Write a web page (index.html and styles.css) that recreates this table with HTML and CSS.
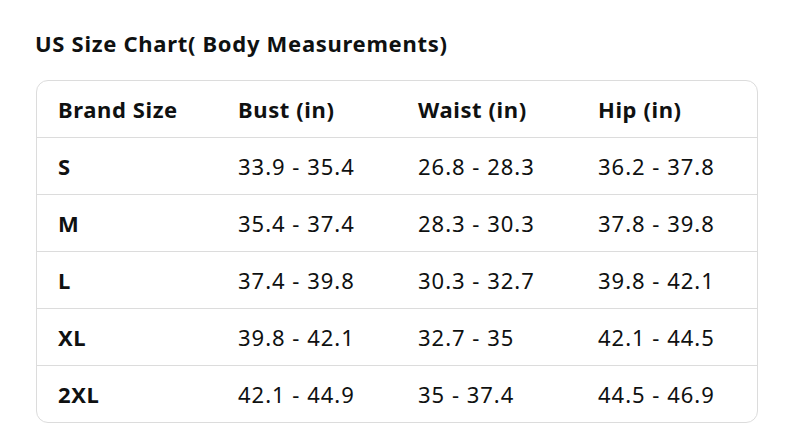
FILE: index.html
```html
<!DOCTYPE html>
<html>
<head>
<meta charset="utf-8">
<link rel="stylesheet" href="styles.css">
</head>
<body>
<div class="page">
  <h2 class="title">US Size Chart( Body Measurements)</h2>
  <div class="card">
    <table class="chart">
      <thead>
        <tr><th>Brand Size</th><th>Bust (in)</th><th>Waist (in)</th><th>Hip (in)</th></tr>
      </thead>
      <tbody>
        <tr><th>S</th><td>33.9 - 35.4</td><td>26.8 - 28.3</td><td>36.2 - 37.8</td></tr>
        <tr><th>M</th><td>35.4 - 37.4</td><td>28.3 - 30.3</td><td>37.8 - 39.8</td></tr>
        <tr><th>L</th><td>37.4 - 39.8</td><td>30.3 - 32.7</td><td>39.8 - 42.1</td></tr>
        <tr><th>XL</th><td>39.8 - 42.1</td><td>32.7 - 35</td><td>42.1 - 44.5</td></tr>
        <tr><th>2XL</th><td>42.1 - 44.9</td><td>35 - 37.4</td><td>44.5 - 46.9</td></tr>
      </tbody>
    </table>
  </div>
</div>
</body>
</html>
```

FILE: styles.css
```css
html, body {
  margin: 0;
  padding: 0;
  background: #ffffff;
}
body {
  font-family: "Noto Sans", "Open Sans", sans-serif;
  color: #0f1111;
}
.page {
  padding: 28px 28px 0 35px;
}
.title {
  margin: 0 0 22px 0;
  font-size: 22px;
  font-weight: 700;
  line-height: 30px;
  letter-spacing: 0.7px;
}
.card {
  width: 720px;
  margin-left: 1px;
  border: 1px solid #dcdcdc;
  border-radius: 12px;
  overflow: hidden;
}
.chart {
  width: 100%;
  border-collapse: collapse;
  table-layout: fixed;
}
.chart th, .chart td {
  height: 56px;
  padding: 0 0 0 21px;
  text-align: left;
  vertical-align: middle;
  font-size: 22px;
  line-height: 28px;
}
.chart th { font-weight: 700; letter-spacing: 0.6px; }
.chart td { font-weight: 400; letter-spacing: 1px; }
.chart tbody tr th, .chart tbody tr td {
  border-top: 1px solid #dcdcdc;
}
```
